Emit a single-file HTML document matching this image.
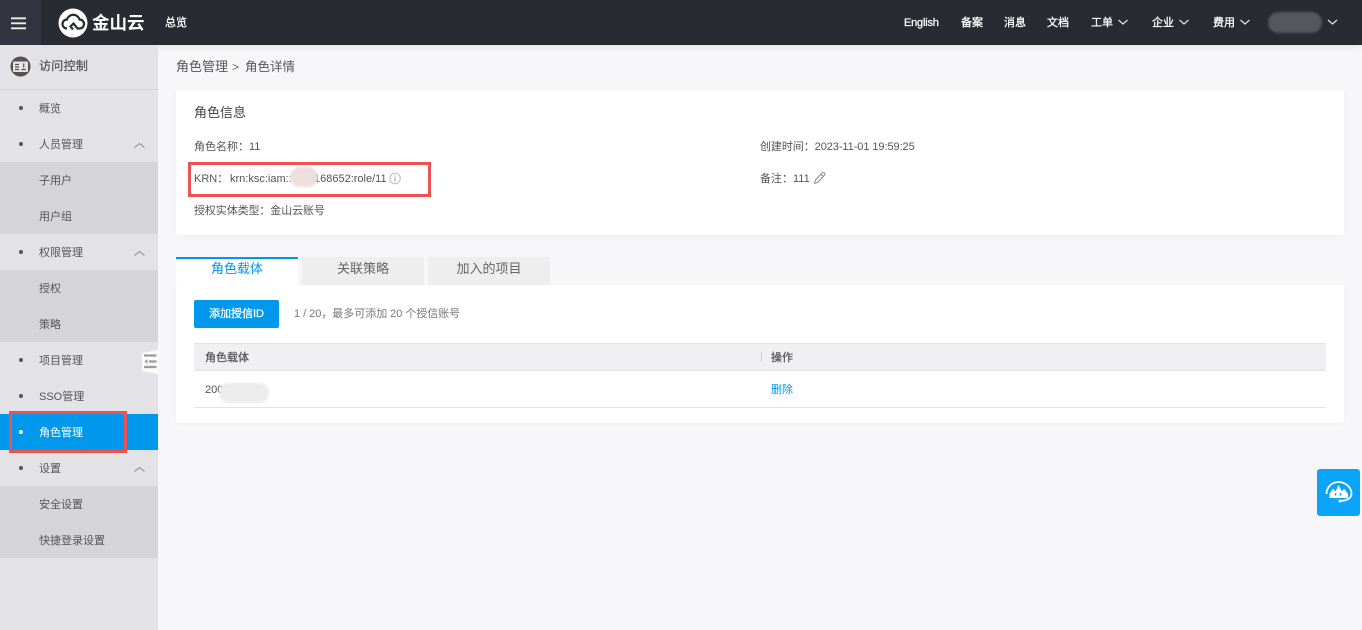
<!DOCTYPE html>
<html lang="zh"><head><meta charset="utf-8"><style>
*{box-sizing:border-box}
html,body{margin:0;padding:0}
body{width:1362px;height:630px;position:relative;overflow:hidden;background:#f7f7f9;font-family:"Liberation Sans","Noto Sans CJK SC",sans-serif;font-size:11px;color:#555}
.a{position:absolute;white-space:nowrap;line-height:16px}
.b{-webkit-text-stroke:.25px currentColor}
.top{position:absolute;left:0;top:0;width:1362px;height:45px;background:#292b33;box-shadow:0 2px 8px rgba(0,0,0,.08)}
.nav{color:#fff;font-size:11px;top:15px;-webkit-text-stroke:.3px #fff}
.side{position:absolute;left:0;top:45px;width:158px;height:585px;background:#e3e2e7}
.sub{position:absolute;left:0;width:158px;background:#d5d4d8}
.card{position:absolute;background:#fff;border-radius:3px;box-shadow:0 1px 6px rgba(0,0,0,.04)}
.dot{position:absolute;left:19px;width:4px;height:4px;border-radius:50%;background:#555}
.m{left:39px;color:#555}
.red{position:absolute;border:3px solid #ec5250}
.tab{position:absolute;top:257px;height:28px;background:#eee;text-align:center;line-height:24px;font-size:13px;color:#666}
.blur{position:absolute;filter:blur(1px)}
</style></head><body>
<div class="top"></div>
<div class="a" style="left:0;top:0;width:41px;height:45px;background:#32353f"></div>
<svg class="a" style="left:11px;top:15px" width="16" height="15"><path d="M0 3.300h15M0 8.300h15M0 13.300h15" stroke="#eee" stroke-width="1.800"/></svg>
<svg class="a" style="left:58px;top:8px" width="30" height="30" viewBox="0 0 30 30"><circle cx="15" cy="15" r="14.500" fill="#fff"/><path d="M9 20.500a4.500 4.500 0 0 1 0-9 6.500 6.500 0 0 1 12.500 0 4.500 4.500 0 0 1 0 9h-2l-4-5-3 3 2.500 3" fill="none" stroke="#292b33" stroke-width="2.200"/></svg>
<div class="a" style="left:92px;top:11px;font-size:17.500px;line-height:24px;color:#fff;font-weight:bold">金山云</div>
<div class="a nav" style="left:165px">总览</div>
<div class="a nav" style="left:904px;letter-spacing:-.2px">English</div>
<div class="a nav" style="left:961px">备案</div>
<div class="a nav" style="left:1004px">消息</div>
<div class="a nav" style="left:1047px">文档</div>
<div class="a nav" style="left:1091px">工单</div>
<div class="a nav" style="left:1152px">企业</div>
<div class="a nav" style="left:1213px">费用</div>
<svg class="a" style="left:1118px;top:19px" width="245" height="8" fill="none" stroke="#ddd" stroke-width="1.300"><path d="M.5 1l4.500 4 4.500-4M61.500 1l4.500 4 4.500-4M122.500 1l4.500 4 4.500-4M210 1l4.500 4 4.500-4"/></svg>
<div class="blur" style="left:1268px;top:12px;width:54px;height:21px;border-radius:11px;background:#55575d"></div>

<div class="side"></div>
<svg class="a" style="left:10px;top:56px" width="21" height="21" viewBox="0 0 21 21"><circle cx="10.500" cy="10.500" r="10" fill="#55514f"/><rect x="3" y="5.500" width="15" height="10.500" rx="1" fill="#e6e4e2"/><path d="M5 8.500h4M5 11h4M5 13.500h4M11.500 13.500h4.500M13.700 7.500v4" stroke="#55514f" stroke-width="1.200"/></svg>
<div class="a b" style="left:39px;top:58px;font-size:12px;letter-spacing:.3px;color:#555">访问控制</div>
<div class="a" style="left:0;top:89px;width:158px;height:1px;background:#d3d3d6"></div>
<div class="sub" style="top:162px;height:72px"></div>
<div class="sub" style="top:270px;height:72px"></div>
<div class="sub" style="top:486px;height:72px"></div>
<div class="a" style="left:0;top:414px;width:158px;height:36px;background:#0098ec"></div>
<i class="dot" style="top:106px"></i><div class="a m" style="top:101px">概览</div>
<i class="dot" style="top:142px"></i><div class="a m" style="top:137px">人员管理</div>
<div class="a m" style="top:173px">子用户</div>
<div class="a m" style="top:209px">用户组</div>
<i class="dot" style="top:250px"></i><div class="a m" style="top:245px">权限管理</div>
<div class="a m" style="top:281px">授权</div>
<div class="a m" style="top:317px">策略</div>
<i class="dot" style="top:358px"></i><div class="a m" style="top:353px">项目管理</div>
<i class="dot" style="top:394px"></i><div class="a m" style="top:389px">SSO管理</div>
<i class="dot" style="top:430px;background:#fff"></i><div class="a m" style="top:425px;color:#fff">角色管理</div>
<i class="dot" style="top:466px"></i><div class="a m" style="top:461px">设置</div>
<div class="a m" style="top:497px">安全设置</div>
<div class="a m" style="top:533px">快捷登录设置</div>
<svg class="a" style="left:134px;top:141px" width="12" height="332" fill="none" stroke="#888" stroke-width="1"><path d="M.5 6.500l5-4 5 4M.5 114.500l5-4 5 4M.5 330.500l5-4 5 4"/></svg>
<svg class="a" style="left:142px;top:350px" width="16" height="24" viewBox="0 0 16 24"><path d="M0 3l16-3v24l-16-3z" fill="#fbfbfc"/><path d="M2 5.500h12.500M7 11.500h7.500M2 17h12.500" stroke="#9c9c9c" stroke-width="2.200"/><path d="M5.500 9l-3 2.500 3 2.500z" fill="#9c9c9c"/></svg>
<div class="red" style="left:9px;top:411px;width:118px;height:42px"></div>

<div class="a" style="left:176px;top:59px;font-size:13px;color:#555">角色管理</div>
<div class="a" style="left:232px;top:59px;font-size:12px;color:#666">&gt;</div>
<div class="a" style="left:245px;top:59px;font-size:12.500px;color:#555">角色详情</div>

<div class="card" style="left:176px;top:90px;width:1168px;height:145px"></div>
<div class="a" style="left:194px;top:105px;font-size:13px;color:#444">角色信息</div>
<div class="a" style="left:194px;top:139px">角色名称：11</div>
<div class="a" style="left:194px;top:171px">KRN：</div>
<div class="a" style="left:230px;top:171px">krn:ksc:iam::</div>
<div class="a" style="left:314px;top:171px">168652:role/11</div>
<div class="blur" style="left:290px;top:167px;width:28px;height:20px;border-radius:10px;background:#ecdfde"></div>
<svg class="a" style="left:389px;top:172px" width="12" height="13" viewBox="0 0 12 13"><circle cx="6" cy="6.500" r="5.300" fill="none" stroke="#bbb"/><path d="M6 5.500v4M6 3.500v1" stroke="#aaa" stroke-width="1.200"/></svg>
<div class="red" style="left:188px;top:162px;width:243px;height:35px"></div>
<div class="a" style="left:194px;top:203px;letter-spacing:-.1px">授权实体类型：金山云账号</div>
<div class="a" style="left:760px;top:139px;letter-spacing:-.07px">创建时间：2023-11-01 19:59:25</div>
<div class="a" style="left:760px;top:171px">备注：111</div>
<svg class="a" style="left:813px;top:171px" width="14" height="14" viewBox="0 0 14 14" fill="none" stroke="#888"><path d="M2.500 9l6.500-7a1.600 1.600 0 0 1 2.500 2.200l-7 7.300-3 .8zM8 3.500l2.500 2.200"/></svg>

<div class="card" style="left:176px;top:285px;width:1168px;height:138px"></div>
<div class="tab" style="left:176px;width:122px;background:#fff;color:#0098ec;border-top:2px solid #0098ec;line-height:20px">角色载体</div>
<div class="tab" style="left:302px;width:122px">关联策略</div>
<div class="tab" style="left:428px;width:122px">加入的项目</div>
<div class="a b" style="left:194px;top:300px;width:85px;height:28px;background:#0098ec;border-radius:2px;color:#fff;text-align:center;line-height:29px">添加授信ID</div>
<div class="a" style="left:294px;top:306px;color:#777;letter-spacing:-.03px">1 / 20，最多可添加 20 个授信账号</div>
<div class="a" style="left:194px;top:343px;width:1132px;height:28px;background:#f0eff4;border-top:1px solid #e3e3e6;border-bottom:1px solid #e3e3e6"></div>
<div class="a b" style="left:205px;top:350px;color:#555">角色载体</div>
<div class="a" style="left:761px;top:352px;width:1px;height:10px;background:#ccc"></div>
<div class="a b" style="left:771px;top:350px;color:#555">操作</div>
<div class="a" style="left:205px;top:382px">200</div>
<div class="blur" style="left:219px;top:383px;width:50px;height:20px;border-radius:10px;background:#ececec"></div>
<div class="a" style="left:771px;top:382px;color:#0098ec">删除</div>
<div class="a" style="left:194px;top:407px;width:1132px;height:1px;background:#e3e3e6"></div>

<div class="a" style="left:1317px;top:469px;width:43px;height:47px;background:#0aa5fb;border-radius:3px"></div>
<svg class="a" style="left:1324px;top:479px" width="30" height="28" viewBox="0 0 30 28"><path d="M2.500 15C2.500 8 8 3 14.500 3S27.500 8 27.500 14.500C27.500 19 24 21.500 16 22" fill="none" stroke="#fff" stroke-width="1.800"/><path d="M5.500 19v-4l3.500-5.500 2.500 3 3-6.500 3.500 6.500 2-3 4 5.500v4z" fill="#fff"/><path d="M11.500 14v2.500M16.500 14v2.500" stroke="#0aa5fb" stroke-width="1.500"/><circle cx="16" cy="22" r="1.500" fill="#fff"/></svg>
</body></html>
